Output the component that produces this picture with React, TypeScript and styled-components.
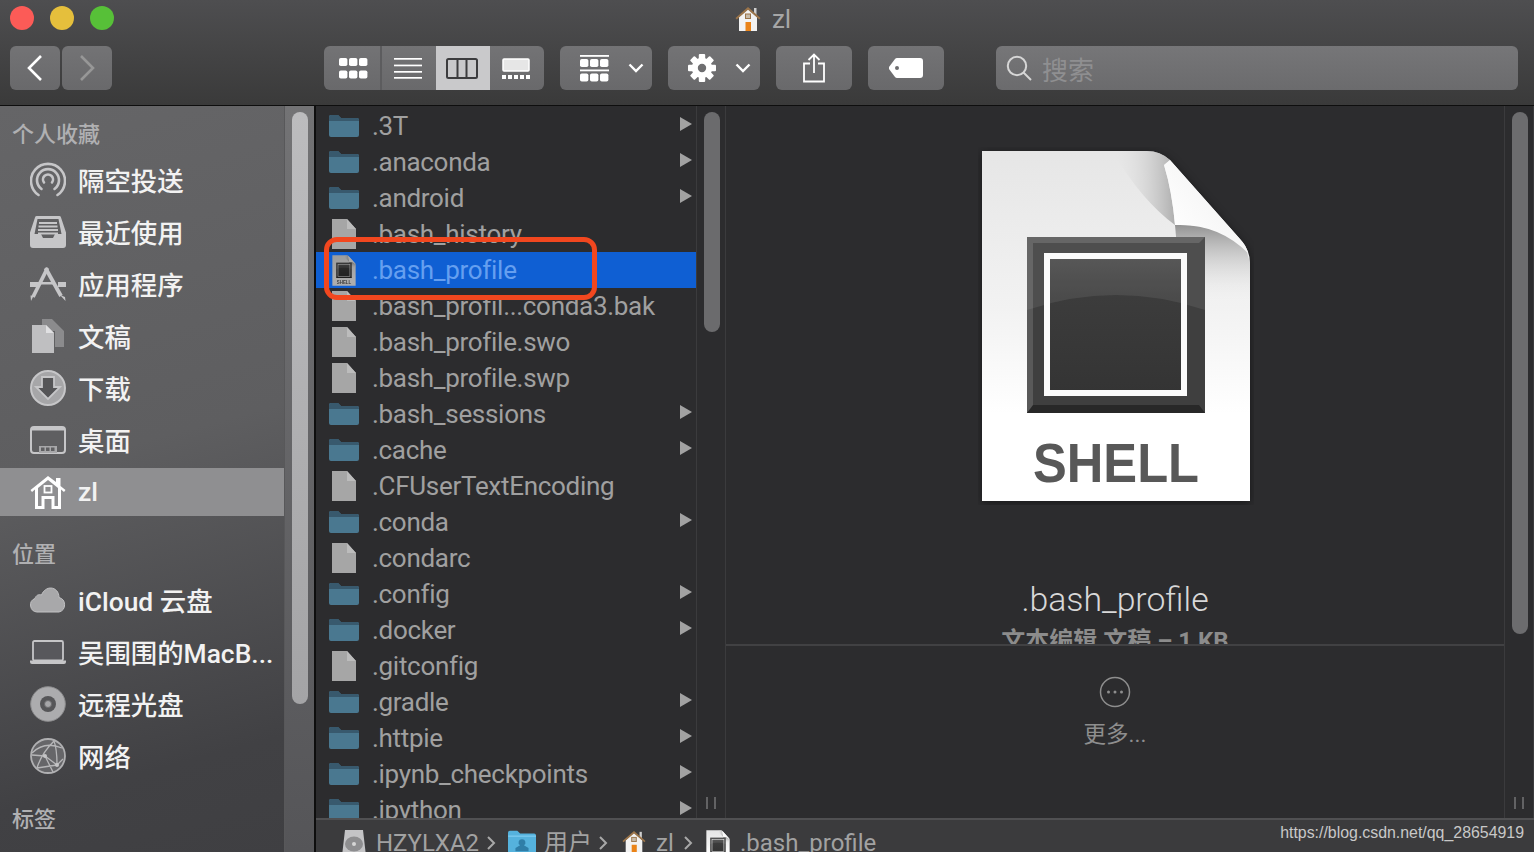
import React, { useId } from "react";
import styled, { createGlobalStyle } from "styled-components";

const Global = createGlobalStyle`
  html, body { margin: 0; padding: 0; background: #2c2c2e; }
  #root { width: 1534px; height: 852px; overflow: hidden; }
  * { box-sizing: border-box; }
`;

const FONT = `"Roboto", "Noto Sans CJK SC", sans-serif`;

const Win = styled.div`
  position: relative;
  width: 1534px;
  height: 852px;
  overflow: hidden;
  display: flex;
  flex-direction: column;
  font-family: ${FONT};
  background: #2c2c2e;
`;

const Toolbar = styled.header`
  flex: none;
  height: 106px;
  background: linear-gradient(180deg, #4e4e50 0%, #3a3a3a 100%);
  border-bottom: 1px solid #0e0e0e;
  display: flex;
  flex-direction: column;
`;

const TitleRow = styled.div`
  height: 38px;
  display: grid;
  grid-template-columns: 1fr auto 1fr;
  align-items: center;
  padding-left: 10px;
`;

const Lights = styled.div`
  display: flex;
  gap: 16px;
  margin-top: -2px;
`;

const Light = styled.span<{ $c: string }>`
  width: 24px;
  height: 24px;
  border-radius: 50%;
  background: ${(p) => p.$c};
`;

const Title = styled.div`
  display: flex;
  align-items: center;
  gap: 11px;
  margin-left: -18px;
  color: #a6a6a6;
  font-size: 26px;
  line-height: 38px;
`;

const Tools = styled.div`
  height: 44px;
  margin-top: 8px;
  display: flex;
  padding-left: 10px;
`;

const Btn = styled.div<{ $w: number; $ml?: number; $on?: boolean; $seg?: boolean; $first?: boolean; $last?: boolean; $split?: boolean }>`
  flex: none;
  width: ${(p) => p.$w}px;
  height: 44px;
  margin-left: ${(p) => p.$ml ?? 0}px;
  padding-left: ${(p) => (p.$split ? 2 : 0)}px;
  padding-right: ${(p) => (p.$seg && !p.$split ? 2 : 0)}px;
  display: flex;
  align-items: center;
  justify-content: center;
  background: ${(p) => (p.$on ? "#c9c9cb" : "linear-gradient(180deg, #737375 0%, #69696b 100%)")};
  border-radius: ${(p) =>
    p.$seg ? `${p.$first ? 6 : 0}px ${p.$last ? 6 : 0}px ${p.$last ? 6 : 0}px ${p.$first ? 6 : 0}px` : "6px"};
  border-right: ${(p) => (p.$split ? "2px solid #5c5c5e" : "none")};
`;

const MenuBtn = styled(Btn)`
  justify-content: flex-start;
  padding-left: 20px;
  gap: 19px;
`;

const Search = styled.div`
  flex: none;
  width: 522px;
  height: 44px;
  margin-left: 52px;
  padding-left: 10px;
  display: flex;
  align-items: center;
  gap: 10px;
  border-radius: 6px;
  background: linear-gradient(180deg, #767678 0%, #6b6b6d 100%);
  color: #8f8f91;
  font-size: 26px;
`;

const Body = styled.div`
  flex: 1;
  min-height: 0;
  display: flex;
`;

const Sidebar = styled.aside`
  flex: none;
  width: 316px;
  display: flex;
  border-right: 2px solid #0e0e0e;
  background: linear-gradient(165deg, #656567 0%, #5e5e60 45%, #414144 85%, #3f3f42 100%);
`;

const SideList = styled.nav`
  width: 284px;
  flex: none;
  padding-top: 13px;
  display: flex;
  flex-direction: column;
`;

const SideHead = styled.div<{ $mt?: number; $mb: number }>`
  flex: none;
  height: 32px;
  padding-left: 12px;
  margin-top: ${(p) => p.$mt ?? 0}px;
  margin-bottom: ${(p) => p.$mb}px;
  font-size: 22px;
  line-height: 32px;
  font-weight: 500;
  color: #b0b0b2;
`;

const SideItems = styled.div`
  flex: none;
  display: flex;
  flex-direction: column;
  gap: 4px;
`;

const SideItem = styled.div<{ $on?: boolean }>`
  height: 48px;
  padding: 0 0 1px 30px;
  display: flex;
  align-items: center;
  gap: 12px;
  color: #f2f2f2;
  font-size: 26.4px;
  font-weight: 500;
  background: ${(p) => (p.$on ? "#8f8f91" : "transparent")};
  white-space: nowrap;
`;

const SideTrack = styled.div`
  flex: none;
  width: 30px;
  padding: 6px 6px 0 7px;
  background: linear-gradient(180deg, #737375 0%, #555558 100%);
  border-left: 1px solid #58585a;
`;

const Thumb = styled.div<{ $h: number; $c: string }>`
  width: 100%;
  height: ${(p) => p.$h}px;
  border-radius: 8px;
  background: ${(p) => p.$c};
`;

const RightPane = styled.div`
  flex: 1;
  min-width: 0;
  display: flex;
  flex-direction: column;
`;

const Columns = styled.div`
  flex: 1;
  min-height: 0;
  display: flex;
`;

const FileList = styled.section`
  flex: none;
  width: 380px;
  padding-top: 2px;
  overflow: hidden;
`;

const Row = styled.div<{ $on?: boolean }>`
  height: 36px;
  padding: 0 4px 0 12px;
  display: flex;
  align-items: center;
  font-size: 26px;
  letter-spacing: -0.3px;
  color: ${(p) => (p.$on ? "#659ff0" : "#a0a0a0")};
  background: ${(p) => (p.$on ? "#0f5fd3" : "transparent")};
  white-space: nowrap;
`;

const RowIcon = styled.span`
  flex: none;
  width: 32px;
  margin-right: 12px;
  display: flex;
  justify-content: center;
`;

const RowName = styled.span`
  flex: 1;
  padding-bottom: 1px;
`;

const RowArrow = styled.span`
  display: flex;
  margin-bottom: 4px;
`;

const Gutter = styled.div`
  flex: none;
  width: 30px;
  padding: 6px 5px 0 7px;
  position: relative;
  border-left: 1px solid #3b3b3d;
  border-right: 1px solid #3b3b3d;
  background: #2c2c2e;
`;

const Handle = styled.div`
  position: absolute;
  bottom: 9px;
  left: 9px;
  width: 10px;
  height: 12px;
  border-left: 2px solid #626264;
  border-right: 2px solid #626264;
`;

const Preview = styled.section`
  flex: 1;
  min-width: 0;
  display: flex;
  flex-direction: column;
  align-items: center;
`;

const PreviewTop = styled.div`
  flex: none;
  width: 100%;
  height: 540px;
  overflow: hidden;
  display: flex;
  flex-direction: column;
  align-items: center;
  padding-top: 41px;
  border-bottom: 2px solid #414143;
`;

const DocSlot = styled.div`
  margin-left: 1px;
  display: flex;
`;

const PreviewName = styled.div`
  margin-top: 71px;
  font-size: 33.8px;
  font-weight: 300;
  line-height: 48px;
  color: #d8d8d8;
`;

const PreviewMeta = styled.div`
  margin-top: 1px;
  font-size: 24px;
  font-weight: 700;
  line-height: 32px;
  color: #8c8c8c;
  white-space: nowrap;
`;

const More = styled.div`
  margin-top: 30px;
  display: flex;
  flex-direction: column;
  align-items: center;
  gap: 11px;
  font-size: 22.5px;
  line-height: 30px;
  color: #8e8e8e;
`;

const PathBar = styled.footer`
  flex: none;
  height: 34px;
  padding: 8px 0 0 26px;
  display: flex;
  align-items: flex-start;
  background: #3b3b3d;
  border-top: 2px solid #505052;
  font-size: 24px;
  line-height: 30px;
  color: #a2a2a2;
  white-space: nowrap;
`;

const Crumb = styled.span<{ $w: number; $gap: number }>`
  flex: none;
  width: ${(p) => p.$w}px;
  display: flex;
  justify-content: center;
  margin-top: 2px;
  margin-right: ${(p) => p.$gap}px;
`;

const CrumbText = styled.span<{ $w: number }>`
  flex: none;
  width: ${(p) => p.$w}px;
`;

const Sep = styled.span<{ $w: number }>`
  flex: none;
  width: ${(p) => p.$w}px;
  padding-top: 8px;
`;

const Watermark = styled.div`
  position: absolute;
  right: 10px;
  bottom: 9px;
  font-family: "Liberation Sans", sans-serif;
  font-size: 15.9px;
  line-height: 20px;
  color: #c8c8c8;
`;

const Annotation = styled.div`
  position: absolute;
  left: 324px;
  top: 237px;
  width: 273px;
  height: 63px;
  border: 5px solid #f2471f;
  border-radius: 13px;
`;

/* ---------- icons ---------- */

const Svg = styled.svg<{ $dim?: boolean }>`
  display: block;
  flex: none;
  filter: ${(p) => (p.$dim ? "brightness(0.68)" : "none")};
`;

const W = "#ffffff";
const G = "#c6c6c8";

const Chevron = ({ dir, c }: { dir: "l" | "r"; c: string }) => (
  <Svg width="18" height="28" viewBox="0 0 18 28">
    <path d={dir === "l" ? "M15 2 3 14l12 12" : "M3 2l12 12L3 26"} fill="none" stroke={c} strokeWidth="2.6" />
  </Svg>
);

const Down = () => (
  <Svg width="16" height="10" viewBox="0 0 16 10">
    <path d="M1.5 1.5 8 8l6.5-6.5" fill="none" stroke={W} strokeWidth="2.4" />
  </Svg>
);

const Squares = ({ y }: { y: number }) => (
  <>
    {[0, 10, 20].map((x) => (
      <rect key={x} x={x} y={y} width="8.4" height="8" rx="1.8" fill={W} />
    ))}
  </>
);

const IconGrid = () => (
  <Svg width="29" height="21" viewBox="0 0 29 21">
    <Squares y={0} />
    <Squares y={12.5} />
  </Svg>
);
const IconLines = () => (
  <Svg width="28" height="21" viewBox="0 0 28 21">
    {[1, 7.6, 14, 20].map((y) => (
      <rect key={y} y={y - 1} width="28" height="1.7" fill={W} />
    ))}
  </Svg>
);
const IconCols = () => (
  <Svg width="32" height="21" viewBox="0 0 32 21">
    <rect x="1" y="1" width="30" height="19" rx="1.5" fill="none" stroke="#3c3c3e" strokeWidth="2" />
    <path d="M11.5 1v19M20.5 1v19" stroke="#3c3c3e" strokeWidth="2" />
  </Svg>
);
const IconGallery = () => (
  <Svg width="28" height="21" viewBox="0 0 28 21">
    <rect x="1" y="1" width="26" height="12" rx="1" fill="#e6e6e6" stroke={W} strokeWidth="1.5" />
    {[0, 6, 12, 18, 24].map((x) => (
      <rect key={x} x={x} y="17" width="4" height="4" fill={W} />
    ))}
  </Svg>
);
const IconArrange = () => (
  <Svg width="29" height="27" viewBox="0 0 29 27">
    <rect width="29" height="1.8" fill={W} />
    <Squares y={4} />
    <rect y="14.5" width="29" height="1.8" fill={W} />
    <Squares y={18.5} />
  </Svg>
);
const IconGear = () => (
  <Svg width="28" height="28" viewBox="0 0 28 28">
    <g fill={W}>
      {[0, 45, 90, 135, 180, 225, 270, 315].map((a) => (
        <rect key={a} x="10.8" y="0" width="6.4" height="6" rx="1" transform={`rotate(${a} 14 14)`} />
      ))}
    </g>
    <circle cx="14" cy="14" r="7.2" fill="none" stroke={W} strokeWidth="6" />
  </Svg>
);
const IconShare = () => (
  <Svg width="22" height="30" viewBox="0 0 22 30">
    <path d="M7 10.5H1v18h20v-18h-6" fill="none" stroke={W} strokeWidth="1.8" />
    <path d="M11 20V1.5M5.5 7 11 1.5 16.5 7" fill="none" stroke={W} strokeWidth="1.8" />
  </Svg>
);
const IconTag = () => (
  <Svg width="34" height="20" viewBox="0 0 34 20">
    <path
      d="M8 0h23a3 3 0 0 1 3 3v14a3 3 0 0 1-3 3H8a3 3 0 0 1-2-1L0 11V9l6-8a3 3 0 0 1 2-1Zm0 8a2 2 0 1 0 0 4 2 2 0 0 0 0-4Z"
      fill={W}
      fillRule="evenodd"
    />
  </Svg>
);
const IconSearch = () => (
  <Svg width="26" height="26" viewBox="0 0 26 26">
    <circle cx="11" cy="11" r="9.2" fill="none" stroke="#d6d6d6" strokeWidth="2" />
    <path d="m17.5 17.5 7.5 7.5" stroke="#d6d6d6" strokeWidth="2" />
  </Svg>
);

const ColorHome = ({ w = 26 }: { w?: number }) => (
  <Svg width={w} height={w} viewBox="0 0 26 26">
    <path d="M19 2h2.5v7H19Z" fill="#cfcfcf" />
    <path d="M4 11 13 3l9 8v14H4Z" fill="#f2f2f2" />
    <path d="M0.5 12 13 1l12.5 11-1.2 1.4L13 3.8 1.7 13.4Z" fill="#9b7449" />
    <rect x="10.5" y="8" width="5" height="4.5" fill="#c7bba9" stroke="#9b7449" />
    <rect x="10.5" y="16" width="5.5" height="9" fill="#ea8318" />
  </Svg>
);

const IconAirdrop = () => (
  <Svg width="36" height="36" viewBox="0 0 36 36">
    <g fill="none" stroke={G} strokeLinecap="round">
      <path d="M8.5 33a17 17 0 1 1 19 0" strokeWidth="2.6" />
      <path d="M11.5 27a11 11 0 1 1 13 0" strokeWidth="2.6" />
      <path d="M14 20.5a5 5 0 1 1 8 0" strokeWidth="2.6" />
    </g>
  </Svg>
);
const IconRecents = () => (
  <Svg width="36" height="32" viewBox="0 0 36 32">
    <path d="M5 1.5A1.5 1.5 0 0 1 6.5 0h23A1.5 1.5 0 0 1 31 1.5l5 15V29a3 3 0 0 1-3 3H3a3 3 0 0 1-3-3V16.5Z" fill={G} />
    <path d="M7.5 3h21l3 15H25l-2 4H13l-2-4H4.5Z" fill="#5f5f61" />
    <path d="M9 7h18M8.5 10.5h19M8 14h20M8 17.5h20" stroke={G} strokeWidth="1.8" />
  </Svg>
);
const IconApps = () => (
  <Svg width="36" height="34" viewBox="0 0 36 34">
    <path d="M0 15h9v5H0ZM28 15h8v5h-8ZM11 15h14v2.5H11Z" fill={G} />
    <path d="M17.5 1 3 30" fill="none" stroke={G} strokeWidth="3.8" />
    <path d="M15.5 1 31 29" fill="none" stroke={G} strokeWidth="3.8" />
    <path d="M3.5 29 1 34l-.5-5.5ZM30 28l5 2 .5 4Z" fill={G} />
  </Svg>
);
const IconDocs = () => (
  <Svg width="36" height="34" viewBox="-2 0 36 34">
    <path d="M10 0h10l12 12v16h-9V12H10Z" fill="#8b8b8d" />
    <path d="M0 6h14l8 8v20H0Z" fill="#bfbfc1" />
    <path d="M14 6l8 8h-8Z" fill="#e0e0e2" />
  </Svg>
);
const IconDownload = () => (
  <Svg width="36" height="36" viewBox="0 0 36 36">
    <circle cx="18" cy="18" r="17" fill="#a6a6a8" stroke={G} strokeWidth="2" />
    <path d="M12 7h12v10h6L18 29 6 17h6Z" fill="#555557" stroke={G} strokeWidth="1.8" />
  </Svg>
);
const IconDesktop = () => (
  <Svg width="36" height="28" viewBox="0 0 36 28">
    <rect x="1" y="1" width="34" height="26" rx="3" fill="#5f5f61" stroke={G} strokeWidth="2" />
    <rect x="1" y="1" width="34" height="3.5" fill={G} />
    <rect x="9" y="20" width="18" height="7" fill="#a8a8aa" />
    {[11, 16, 21].map((x) => (
      <rect key={x} x={x} y="21.5" width="3.5" height="3.5" fill="#5f5f61" />
    ))}
  </Svg>
);
const IconHome = () => (
  <Svg width="36" height="34" viewBox="0 0 36 34">
    <path d="M0.5 15 18 1l8 6V3h4.5v8L35.5 15l-1.5 2-3-2.5V34H21.5V24h-7v10H5V14.5L2 17Z" fill={W} />
    <path d="M8 13 18 5l10 8v18h-3.5V21h-13v10H8Z" fill="#8f8f91" />
    <rect x="14.5" y="11" width="7" height="6.5" fill="none" stroke={W} strokeWidth="1.8" />
  </Svg>
);
const IconCloud = () => (
  <Svg width="36" height="26" viewBox="0 0 36 26">
    <path d="M7 25a7 7 0 0 1-2-13.5C6 8 9 7 11.5 8 13.5 3 17.5 1 20.5 1c5 0 8.5 4 8.5 9.5A7.5 7.5 0 0 1 29 25Z" fill="#a8a8aa" stroke="#c2c2c4" />
  </Svg>
);
const IconLaptop = () => (
  <Svg width="36" height="24" viewBox="0 0 36 24">
    <rect x="3" y="1" width="30" height="19.5" rx="1.5" fill="#58585c" stroke={G} strokeWidth="1.8" />
    <path d="M0 20.5h36V22a2 2 0 0 1-2 2H2a2 2 0 0 1-2-2Z" fill={G} />
  </Svg>
);
const IconDisc = () => (
  <Svg width="36" height="36" viewBox="0 0 36 36">
    <circle cx="18" cy="18" r="17.3" fill="#acacae" stroke="#8c8c8e" />
    <circle cx="18" cy="18" r="8" fill="#565658" />
    <circle cx="18" cy="18" r="3.5" fill="#a6a6a8" stroke="#6a6a6c" />
  </Svg>
);
const IconGlobe = () => (
  <Svg width="36" height="36" viewBox="0 0 36 36">
    <circle cx="18" cy="18" r="17" fill="#666669" stroke="#b0b0b2" strokeWidth="1.8" />
    <g fill="none" stroke="#b6b6b8" strokeWidth="1.3">
      <path d="M2 15c8-8 18-10 30-5M7 30c3-10 8-18 17-27M15 18l12 9M15 18l-13-1M27 27l6-6M15 18l8 16M24 3c3 8 3 16 3 24M7 30l20-3" />
    </g>
    <g fill="#c4c4c6">
      <circle cx="15" cy="18" r="2" />
      <circle cx="27" cy="27" r="2" />
    </g>
  </Svg>
);

const IconFolder = () => (
  <Svg width="30" height="22" viewBox="0 0 30 22">
    <path d="M0 2a2 2 0 0 1 2-2h7l3 3h16a2 2 0 0 1 2 2v15a2 2 0 0 1-2 2H2a2 2 0 0 1-2-2Z" fill="#4a7890" />
    <path d="M0 2a2 2 0 0 1 2-2h7l3 3h16a2 2 0 0 1 2 2v1H0Z" fill="#38596d" />
  </Svg>
);

const IconFile = () => (
  <Svg width="24" height="30" viewBox="0 0 24 30">
    <path d="M0 0h15l9 10v20H0Z" fill="#a6a6a6" />
    <path d="M15 0l9 10h-9Z" fill="#bcbcbc" />
  </Svg>
);

const ShellDoc = ({ w, h, dim }: { w: number; h: number; dim?: boolean }) => {
  const id = useId().replace(/[^a-zA-Z0-9]/g, "");
  const shadow = w > 100;
  return (
    <Svg $dim={dim} width={w} height={h} viewBox="-4 -4 276 358" preserveAspectRatio="none">
      <defs>
        <linearGradient id={`${id}p`} x1="0" y1="0" x2="0" y2="1">
          <stop offset="0" stopColor="#e6e6e6" />
          <stop offset="0.45" stopColor="#f2f2f2" />
          <stop offset="0.75" stopColor="#ffffff" />
        </linearGradient>
        <linearGradient id={`${id}f`} x1="0.1" y1="0.8" x2="0.8" y2="0.2">
          <stop offset="0" stopColor="#ffffff" />
          <stop offset="0.7" stopColor="#f6f6f6" />
          <stop offset="1" stopColor="#dcdcdc" />
        </linearGradient>
        <linearGradient id={`${id}s`} x1="0" y1="0" x2="0" y2="1">
          <stop offset="0" stopColor="#8e8e8e" stopOpacity="0.95" />
          <stop offset="1" stopColor="#f2f2f2" stopOpacity="0" />
        </linearGradient>
        <linearGradient id={`${id}c`} x1="0" y1="0" x2="1" y2="0">
          <stop offset="0" stopColor="#e8e8e8" stopOpacity="0" />
          <stop offset="1" stopColor="#a4a4a4" stopOpacity="0.85" />
        </linearGradient>
        <linearGradient id={`${id}g`} x1="0" y1="0" x2="0" y2="1">
          <stop offset="0" stopColor="#4a4a4a" />
          <stop offset="0.3" stopColor="#3c3c3c" />
          <stop offset="1" stopColor="#343434" />
        </linearGradient>
      </defs>
      <path
        d="M0 0H165Q178 0 188 9L258 88Q268 99 268 112V350H0Z"
        fill={`url(#${id}p)`}
        style={shadow ? { filter: "drop-shadow(0 2px 5px rgba(0,0,0,.45))" } : undefined}
      />
      <path d="M130 0H165Q178 0 188 9L182 14Q190 40 193 74Q160 50 130 0Z" fill={`url(#${id}c)`} />
      <path d="M193 74Q236 72 264 98L268 112V152H200Z" fill={`url(#${id}s)`} />
      <path d="M182 14L188 9L258 88Q264 94 266 102Q236 72 193 74Q190 40 182 14Z" fill={`url(#${id}f)`} />
      <rect x="45" y="86" width="178" height="176" fill="#3f3f3f" />
      <path d="M45 86h178l-6 6H51v164l-6 6Z" fill="#595959" />
      <path d="M45 262h178l-6-8H51Z" fill="#282828" />
      <rect x="65" y="105" width="137" height="137" fill={`url(#${id}g)`} stroke="#fbfbfb" strokeWidth="6" />
      <path d="M45 86h178v73Q134 129 45 159Z" fill="#ffffff" opacity="0.08" />
      <text
        x="51"
        y="331"
        fontFamily="Liberation Sans, sans-serif"
        fontWeight="700"
        fontSize="56"
        fill="#585858"
        textLength="166"
        lengthAdjust="spacingAndGlyphs"
      >
        SHELL
      </text>
    </Svg>
  );
};

const IconEllipsis = () => (
  <Svg width="32" height="32" viewBox="0 0 32 32">
    <circle cx="16" cy="16" r="14.5" fill="none" stroke="#8e8e8e" strokeWidth="1.5" />
    {[9.5, 16, 22.5].map((x) => (
      <circle key={x} cx={x} cy="16" r="1.5" fill="#8e8e8e" />
    ))}
  </Svg>
);

const IconDisk = () => (
  <Svg width="24" height="30" viewBox="0 0 24 30">
    <path d="M3 0h18l3 26a3 3 0 0 1-3 4H3a3 3 0 0 1-3-4Z" fill="#c4c4c6" />
    <ellipse cx="12" cy="14" rx="9" ry="7.5" fill="#8e8e90" />
    <circle cx="12" cy="14" r="2" fill="#d6d6d6" />
  </Svg>
);

const IconUser = () => (
  <Svg width="28" height="24" viewBox="0 0 30 24">
    <path d="M0 2a2 2 0 0 1 2-2h8l3 3h15a2 2 0 0 1 2 2v17a2 2 0 0 1-2 2H2a2 2 0 0 1-2-2Z" fill="#55b2dd" />
    <path d="M0 5h30v1.5H0Z" fill="#7ac9ee" />
    <path d="M15 9a3.5 3.5 0 0 1 2 6.5l5 3V22H8v-3.5l5-3A3.5 3.5 0 0 1 15 9Z" fill="#2f7ea8" />
  </Svg>
);

const Tri = () => (
  <Svg width="12" height="14" viewBox="0 0 12 14">
    <path d="M0 0l12 7-12 7Z" fill="#a2a2a2" />
  </Svg>
);

const PathChev = () => (
  <Svg width="10" height="14" viewBox="0 0 10 14">
    <path d="M2 1l6 6-6 6" fill="none" stroke="#a8a8a8" strokeWidth="2" />
  </Svg>
);

/* ---------- data ---------- */

const favourites = [
  { name: "隔空投送", icon: <IconAirdrop /> },
  { name: "最近使用", icon: <IconRecents /> },
  { name: "应用程序", icon: <IconApps /> },
  { name: "文稿", icon: <IconDocs /> },
  { name: "下载", icon: <IconDownload /> },
  { name: "桌面", icon: <IconDesktop /> },
  { name: "zl", icon: <IconHome />, on: true },
];

const places = [
  { name: "iCloud 云盘", icon: <IconCloud /> },
  { name: "吴围围的MacB...", icon: <IconLaptop /> },
  { name: "远程光盘", icon: <IconDisc /> },
  { name: "网络", icon: <IconGlobe /> },
];

type Kind = "d" | "f" | "s";
const files: [string, Kind][] = [
  [".3T", "d"],
  [".anaconda", "d"],
  [".android", "d"],
  [".bash_history", "f"],
  [".bash_profile", "s"],
  [".bash_profil...conda3.bak", "f"],
  [".bash_profile.swo", "f"],
  [".bash_profile.swp", "f"],
  [".bash_sessions", "d"],
  [".cache", "d"],
  [".CFUserTextEncoding", "f"],
  [".conda", "d"],
  [".condarc", "f"],
  [".config", "d"],
  [".docker", "d"],
  [".gitconfig", "f"],
  [".gradle", "d"],
  [".httpie", "d"],
  [".ipynb_checkpoints", "d"],
  [".ipython", "d"],
];

export default function App() {
  return (
    <Win>
      <Global />
      <Toolbar>
        <TitleRow>
          <Lights>
            <Light $c="#fc5b57" />
            <Light $c="#e5bf3c" />
            <Light $c="#57c038" />
          </Lights>
          <Title>
            <ColorHome />
            zl
          </Title>
          <span />
        </TitleRow>
        <Tools>
          <Btn $w={50}>
            <Chevron dir="l" c={W} />
          </Btn>
          <Btn $w={50} $ml={2}>
            <Chevron dir="r" c="#979797" />
          </Btn>
          <Btn $w={58} $ml={212} $seg $first $split>
            <IconGrid />
          </Btn>
          <Btn $w={54} $seg>
            <IconLines />
          </Btn>
          <Btn $w={54} $seg $on>
            <IconCols />
          </Btn>
          <Btn $w={54} $seg $last>
            <IconGallery />
          </Btn>
          <MenuBtn $w={92} $ml={16}>
            <IconArrange />
            <Down />
          </MenuBtn>
          <MenuBtn $w={92} $ml={16}>
            <IconGear />
            <Down />
          </MenuBtn>
          <Btn $w={76} $ml={16}>
            <IconShare />
          </Btn>
          <Btn $w={76} $ml={16}>
            <IconTag />
          </Btn>
          <Search>
            <IconSearch />
            搜索
          </Search>
        </Tools>
      </Toolbar>

      <Body>
        <Sidebar>
          <SideList>
            <SideHead $mb={5}>个人收藏</SideHead>
            <SideItems>
              {favourites.map((f) => (
                <SideItem key={f.name} $on={f.on}>
                  {f.icon}
                  {f.name}
                </SideItem>
              ))}
            </SideItems>
            <SideHead $mt={23} $mb={5}>
              位置
            </SideHead>
            <SideItems>
              {places.map((f) => (
                <SideItem key={f.name}>
                  {f.icon}
                  {f.name}
                </SideItem>
              ))}
            </SideItems>
            <SideHead $mt={24} $mb={0}>
              标签
            </SideHead>
          </SideList>
          <SideTrack>
            <Thumb $h={592} $c="linear-gradient(180deg, #bcbcbe 0%, #a4a4a6 100%)" />
          </SideTrack>
        </Sidebar>

        <RightPane>
          <Columns>
            <FileList>
              {files.map(([name, kind]) => (
                <Row key={name} $on={kind === "s"}>
                  <RowIcon>
                    {kind === "d" && <IconFolder />}
                    {kind === "f" && <IconFile />}
                    {kind === "s" && <ShellDoc w={24} h={31} dim />}
                  </RowIcon>
                  <RowName>{name}</RowName>
                  {kind === "d" && (
                    <RowArrow>
                      <Tri />
                    </RowArrow>
                  )}
                </Row>
              ))}
            </FileList>

            <Gutter>
              <Thumb $h={220} $c="#6b6b6d" />
              <Handle />
            </Gutter>

            <Preview>
              <PreviewTop>
                <DocSlot>
                  <ShellDoc w={276} h={358} />
                </DocSlot>
                <PreviewName>.bash_profile</PreviewName>
                <PreviewMeta>文本编辑 文稿 – 1 KB</PreviewMeta>
              </PreviewTop>
              <More>
                <IconEllipsis />
                更多...
              </More>
            </Preview>

            <Gutter>
              <Thumb $h={522} $c="#6c6c6e" />
              <Handle />
            </Gutter>
          </Columns>

          <PathBar>
            <Crumb $w={24} $gap={10}>
              <IconDisk />
            </Crumb>
            <CrumbText $w={110}>HZYLXA2</CrumbText>
            <Sep $w={22}>
              <PathChev />
            </Sep>
            <Crumb $w={28} $gap={8}>
              <IconUser />
            </Crumb>
            <CrumbText $w={54}>用户</CrumbText>
            <Sep $w={24}>
              <PathChev />
            </Sep>
            <Crumb $w={24} $gap={10}>
              <ColorHome w={24} />
            </Crumb>
            <CrumbText $w={27}>zl</CrumbText>
            <Sep $w={23}>
              <PathChev />
            </Sep>
            <Crumb $w={24} $gap={10}>
              <ShellDoc w={24} h={31} />
            </Crumb>
            <span>.bash_profile</span>
          </PathBar>
        </RightPane>
      </Body>

      <Watermark>https://blog.csdn.net/qq_28654919</Watermark>
      <Annotation />
    </Win>
  );
}
